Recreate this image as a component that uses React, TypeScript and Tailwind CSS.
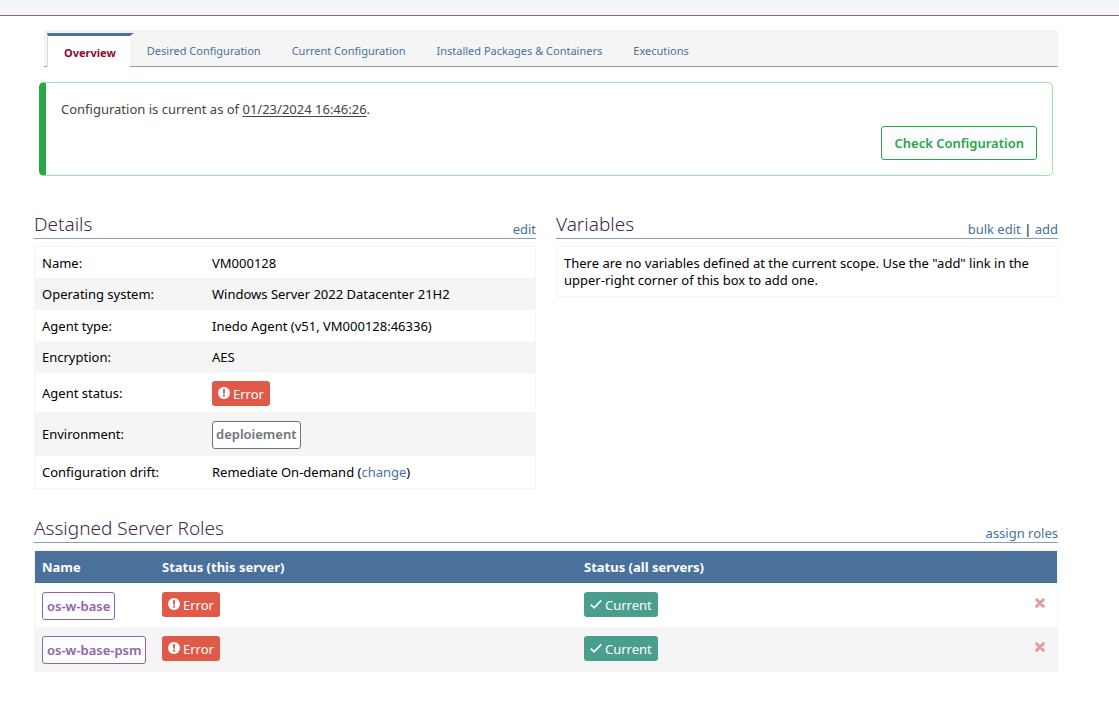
import type { ReactNode } from "react";

const linkClass = "text-[#49719c] hover:underline";

const badgeClass =
  "inline-flex h-[25px] items-center gap-[3px] rounded-[3px] px-1.5 align-top text-[13px] leading-5 text-white";

function ErrorBadge() {
  return (
    <span className={`${badgeClass} bg-[#df5a49]`}>
      <svg viewBox="0 0 12 12" className="mb-0.5 size-3" aria-hidden="true">
        <circle cx="6" cy="6" r="6" fill="#fff" />
        <path d="M4.9 2.3h2.2l-.3 4.4H5.2z" fill="#df5a49" />
        <circle cx="6" cy="8.7" r="1.1" fill="#df5a49" />
      </svg>
      Error
    </span>
  );
}

function CurrentBadge() {
  return (
    <span className={`${badgeClass} bg-[#4a9e8e]`}>
      <svg viewBox="0 0 12 12" className="mb-0.5 size-3" aria-hidden="true">
        <path d="M.8 6.6 4.1 9.8 11.3 2.4" fill="none" stroke="#fff" strokeWidth="1.6" />
      </svg>
      Current
    </span>
  );
}

function SectionHeader({ title, children }: { title: string; children: ReactNode }) {
  return (
    <header className="mb-[7px] flex h-7 items-end justify-between border-b border-[#8e9cb2]">
      <h2 className="text-[19px] leading-7 font-light text-[#3c2850]">{title}</h2>
      <div className="text-[13px] leading-[18px] text-black">{children}</div>
    </header>
  );
}

const tabs = ["Desired Configuration", "Current Configuration", "Installed Packages & Containers", "Executions"];

const details: { label: string; value: ReactNode; height: string }[] = [
  { label: "Name:", value: "VM000128", height: "h-[31px]" },
  { label: "Operating system:", value: "Windows Server 2022 Datacenter 21H2", height: "h-8" },
  { label: "Agent type:", value: "Inedo Agent (v51, VM000128:46336)", height: "h-[31px]" },
  { label: "Encryption:", value: "AES", height: "h-8" },
  { label: "Agent status:", value: <ErrorBadge />, height: "h-[39px]" },
  {
    label: "Environment:",
    value: (
      <a
        href="#environment"
        className="inline-flex h-7 items-center rounded-[3px] border border-[#6c757d] bg-white px-[3px] align-top font-semibold text-[#6c757d]"
      >
        deploiement
      </a>
    ),
    height: "h-11",
  },
  {
    label: "Configuration drift:",
    value: (
      <>
        Remediate On-demand (
        <a href="#change" className={linkClass}>
          change
        </a>
        )
      </>
    ),
    height: "h-8",
  },
];

const roles = ["os-w-base", "os-w-base-psm"];

export default function App() {
  return (
    <div className="bg-white font-['Noto_Sans','Open_Sans',sans-serif] text-[13px] text-black">
      <div className="h-4 border-b border-[#9360a9] bg-[#f5f5f5]" />

      <main className="pt-3.5 pr-[61px] pb-12 pl-[34px]">
        <nav className="ml-2.5 flex h-[37px] items-end border-b border-[#8e9cb2] bg-[#f5f5f5] pl-[3px] text-[11px]">
          <a
            href="#overview"
            className="-mb-px flex h-[34px] items-center border-t-3 border-r-4 border-l border-t-[#49719c] border-r-transparent border-l-[#dddddd] bg-white bg-clip-padding pt-1 pr-3.5 pl-4 font-bold text-[#8b0a2e]"
          >
            Overview
          </a>
          <div className="flex h-8 items-center gap-[31px] pt-0.5 pl-[13px]">
            {tabs.map((tab) => (
              <a key={tab} href="#tab" className="whitespace-nowrap text-[#49719c]">
                {tab}
              </a>
            ))}
          </div>
        </nav>

        <section className="mx-[5px] mt-[15px] flex h-[94px] flex-col justify-between rounded-[5px] border border-l-[7px] border-[#9be3a9] border-l-[#28a745] pt-4 pr-[15px] pb-[15px] pl-[15px]">
          <p className="leading-5 text-[#444444]">
            Configuration is current as of <span className="underline underline-offset-2">01/23/2024 16:46:26</span>.
          </p>
          <button
            type="button"
            className="h-[34px] self-end rounded-[3px] border border-[#28a745] bg-[#fbfdff] px-3 pt-0.5 font-semibold text-[#28a745]"
          >
            Check Configuration
          </button>
        </section>

        <div className="mt-[35px] grid grid-cols-2 gap-5">
          <section>
            <SectionHeader title="Details">
              <a href="#edit" className={linkClass}>
                edit
              </a>
            </SectionHeader>
            <table className="w-full border-separate border-spacing-0 border border-[#f5f5f5] text-left">
              <tbody>
                {details.map((row) => (
                  <tr key={row.label} className={`${row.height} even:bg-[#f5f5f5]`}>
                    <th scope="row" className="w-[170px] pt-0.5 pb-0 pl-[7px] font-normal">
                      {row.label}
                    </th>
                    <td className="pt-0.5 pb-0 pl-[7px]">{row.value}</td>
                  </tr>
                ))}
              </tbody>
            </table>
          </section>

          <section>
            <SectionHeader title="Variables">
              <a href="#bulk-edit" className={linkClass}>
                bulk edit
              </a>{" "}
              |{" "}
              <a href="#add" className={linkClass}>
                add
              </a>
            </SectionHeader>
            <p className="border border-[#f5f5f5] px-[7px] pt-2 pb-[7px] leading-[17px]">
              There are no variables defined at the current scope. Use the "add" link in the upper-right corner of this
              box to add one.
            </p>
          </section>
        </div>

        <section className="mt-[26px]">
          <SectionHeader title="Assigned Server Roles">
            <a href="#assign-roles" className={linkClass}>
              assign roles
            </a>
          </SectionHeader>
          <table className="w-full table-fixed border-separate border-spacing-0 border border-[#f5f5f5] text-left">
            <thead>
              <tr className="h-8 bg-[#49719c] text-white">
                <th className="w-[120px] pt-0.5 pb-0 pl-[7px] font-bold">Name</th>
                <th className="pt-0.5 pb-0 pl-[7px] font-bold">Status (this server)</th>
                <th className="pt-0.5 pb-0 pl-[7px] font-bold">Status (all servers)</th>
                <th className="w-[58px] py-0" aria-label="Remove" />
              </tr>
            </thead>
            <tbody>
              {roles.map((role) => (
                <tr key={role} className="h-11 even:bg-[#f5f5f5]">
                  <td className="py-0 pt-[9px] pl-[7px] align-top">
                    <a
                      href="#role"
                      className="inline-flex h-7 items-center rounded-[3px] border border-[#9360a9] bg-[#fbfdff] px-1 pt-px align-top font-semibold whitespace-nowrap text-[#9360a9]"
                    >
                      {role}
                    </a>
                  </td>
                  <td className="pt-[9px] pl-[7px] align-top">
                    <ErrorBadge />
                  </td>
                  <td className="pt-[9px] pl-[7px] align-top">
                    <CurrentBadge />
                  </td>
                  <td className="pt-[15px] pr-3 text-right align-top">
                    <button type="button" aria-label={`Remove ${role}`} className="inline-flex align-top">
                      <svg viewBox="0 0 10 10" className="size-2.5" aria-hidden="true">
                        <path
                          d="M1.7 1.7 8.3 8.3M8.3 1.7 1.7 8.3"
                          stroke="#e39a9a"
                          strokeWidth="3"
                          strokeLinecap="round"
                        />
                      </svg>
                    </button>
                  </td>
                </tr>
              ))}
            </tbody>
          </table>
        </section>
      </main>
    </div>
  );
}
